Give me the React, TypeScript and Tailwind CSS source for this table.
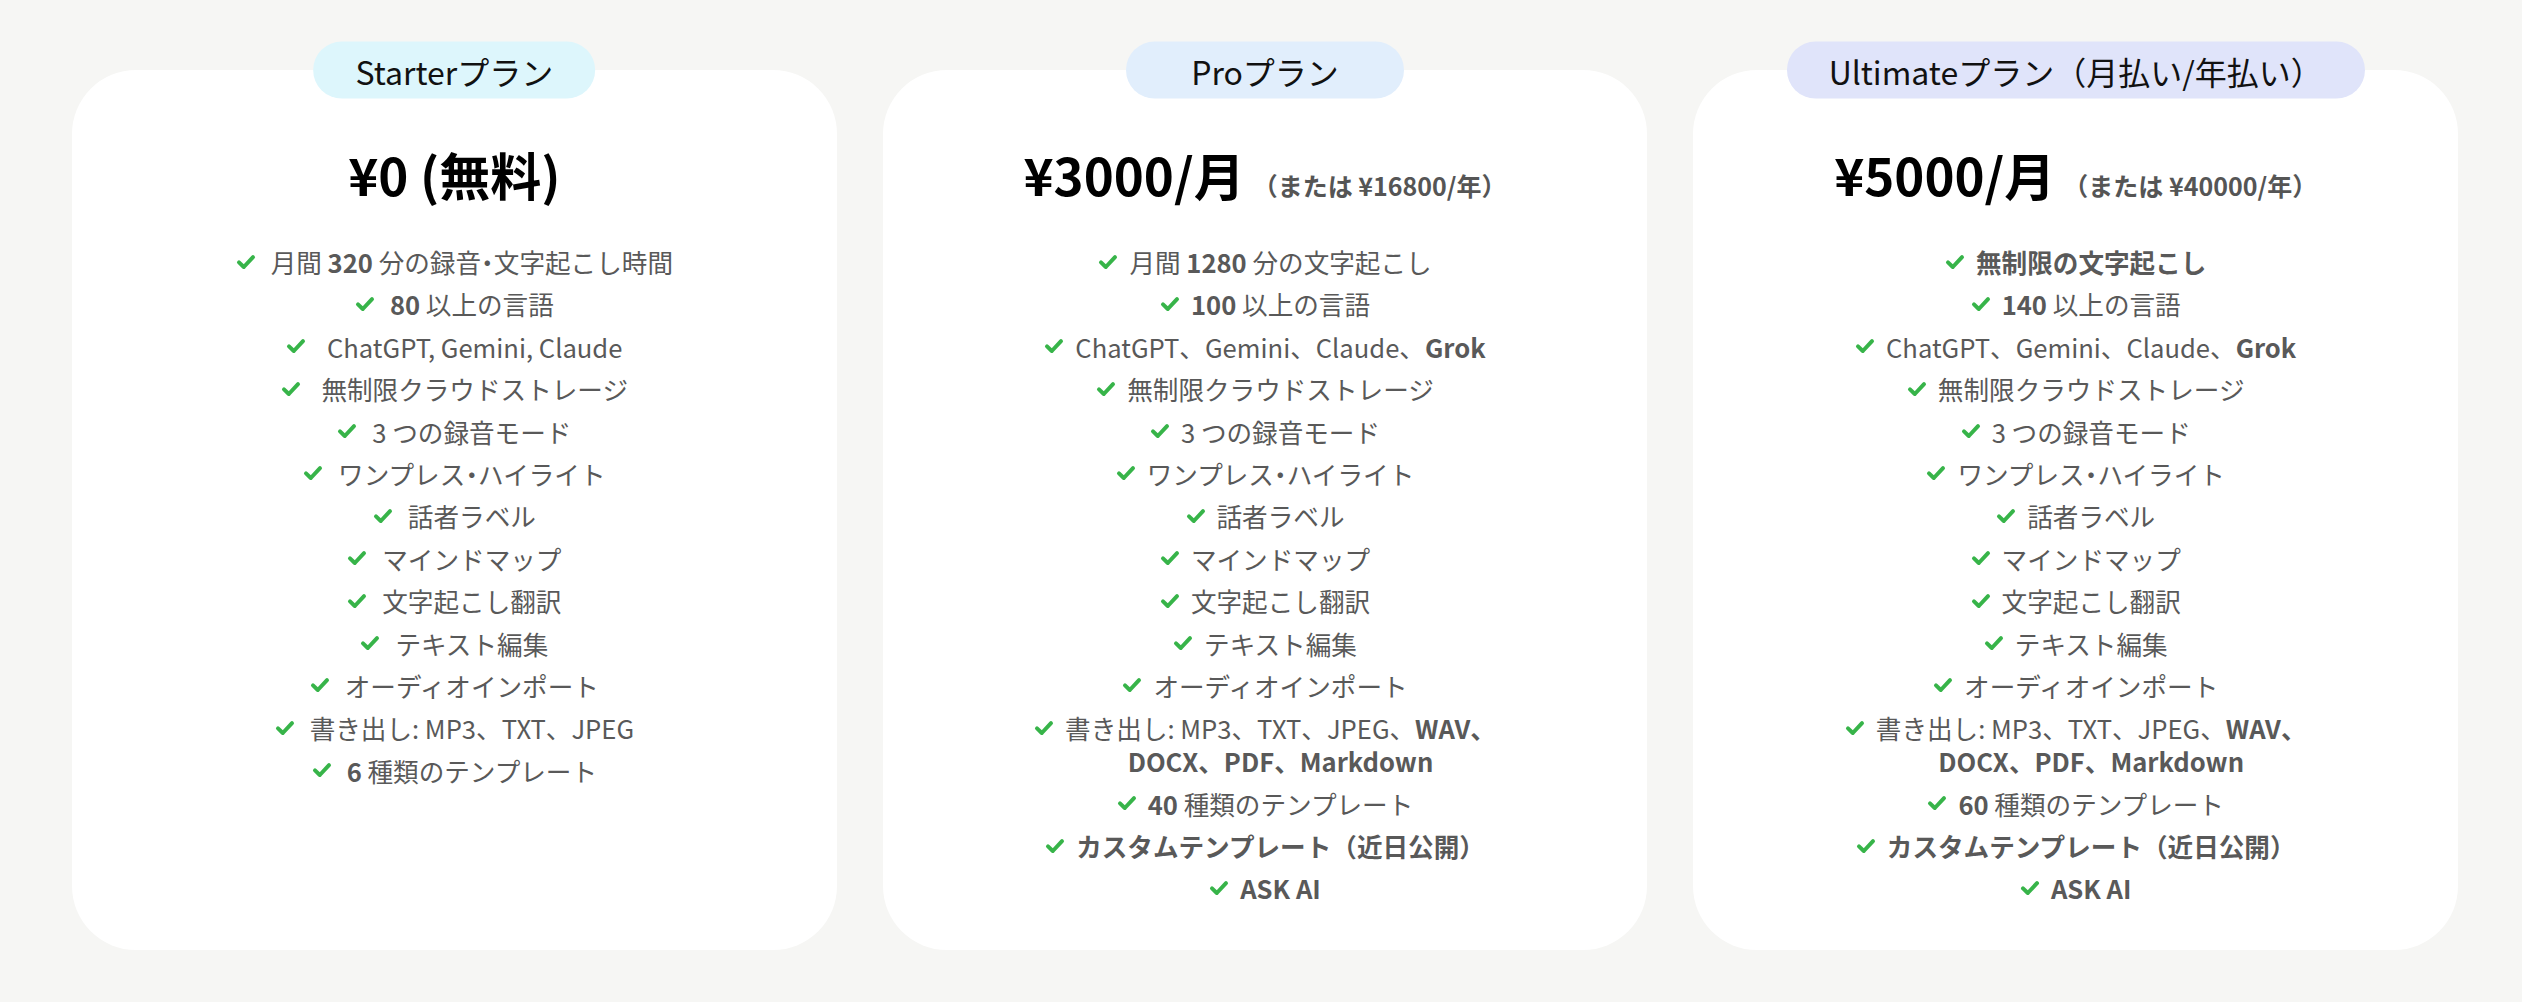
import React from "react";

type Plan = {
  badge: string;
  badgeBg: string;
  price: string;
  sub?: string;
  gap: string;
  features: React.ReactNode[];
};

const B = ({ children }: { children: React.ReactNode }) => (
  <span className="font-bold">{children}</span>
);

// half-width middle dot, as in the original
const Dot = () => <span className="[font-feature-settings:'halt']">・</span>;

const CheckIcon = () => (
  <svg
    viewBox="0 0 20 16"
    className="w-[20px] h-[16px] shrink-0 text-[#37b449]"
    fill="none"
    stroke="currentColor"
    strokeWidth="4"
    strokeLinecap="round"
    strokeLinejoin="round"
  >
    <path d="M3 8.4 7.8 13 17 3.2" />
  </svg>
);

const shared: React.ReactNode[] = [
  "無制限クラウドストレージ",
  "3 つの録音モード",
  <>
    ワンプレス<Dot />ハイライト
  </>,
  "話者ラベル",
  "マインドマップ",
  "文字起こし翻訳",
  "テキスト編集",
  "オーディオインポート",
];

const exportsFull = (
  <>
    書き出し: MP3、TXT、JPEG、<B>WAV、</B>
    <br />
    <B>DOCX、PDF、Markdown</B>
  </>
);

const plans: Plan[] = [
  {
    badge: "Starterプラン",
    badgeBg: "bg-[#ddf6fc]",
    price: "¥0 (無料)",
    gap: "gap-[15px]",
    features: [
      <>
        月間 <B>320</B> 分の録音<Dot />文字起こし時間
      </>,
      <>
        <B>80</B> 以上の言語
      </>,
      <>&nbsp;ChatGPT, Gemini, Claude</>,
      <>&nbsp;{shared[0]}</>,
      ...shared.slice(1),
      "書き出し: MP3、TXT、JPEG",
      <>
        <B>6</B> 種類のテンプレート
      </>,
    ],
  },
  {
    badge: "Proプラン",
    badgeBg: "bg-[#e1eefc]",
    price: "¥3000/月",
    sub: "（または ¥16800/年）",
    gap: "gap-[11px]",
    features: [
      <>
        月間 <B>1280</B> 分の文字起こし
      </>,
      <>
        <B>100</B> 以上の言語
      </>,
      <>
        ChatGPT、Gemini、Claude、<B>Grok</B>
      </>,
      ...shared,
      exportsFull,
      <>
        <B>40</B> 種類のテンプレート
      </>,
      <B>カスタムテンプレート（近日公開）</B>,
      <B>ASK AI</B>,
    ],
  },
  {
    badge: "Ultimateプラン（月払い/年払い）",
    badgeBg: "bg-[#e0e4fa]",
    price: "¥5000/月",
    sub: "（または ¥40000/年）",
    gap: "gap-[11px]",
    features: [
      <B>無制限の文字起こし</B>,
      <>
        <B>140</B> 以上の言語
      </>,
      <>
        ChatGPT、Gemini、Claude、<B>Grok</B>
      </>,
      ...shared,
      exportsFull,
      <>
        <B>60</B> 種類のテンプレート
      </>,
      <B>カスタムテンプレート（近日公開）</B>,
      <B>ASK AI</B>,
    ],
  },
];

const PlanCard = ({ plan }: { plan: Plan }) => (
  <div className="relative flex-1 h-[880px] bg-white rounded-[64px] pt-[74px]">
    <div
      className={`absolute left-1/2 top-0 -translate-x-1/2 -translate-y-1/2 h-[57px] min-w-[278px] px-[42px] rounded-full flex items-center justify-center whitespace-nowrap text-[32px] text-[#111] ${plan.badgeBg}`}
    >
      {plan.badge}
    </div>

    <div className="h-[60px] flex items-baseline justify-center gap-[8px] leading-[60px] whitespace-nowrap">
      <span className="text-[51px] font-bold text-black">{plan.price}</span>
      {plan.sub && (
        <span className="text-[25px] leading-none font-semibold text-[#555]">{plan.sub}</span>
      )}
    </div>

    <ul className="mt-[41px] flex flex-col gap-[9.4px] text-[25.6px] leading-[33px] text-[#595959]">
      {plan.features.map((f, i) => (
        <li key={i} className={`flex items-start justify-center ${plan.gap}`}>
          <span className="h-[33px] flex items-center">
            <CheckIcon />
          </span>
          <span className="text-center whitespace-nowrap">{f}</span>
        </li>
      ))}
    </ul>
  </div>
);

export default function App() {
  return (
    <div className="w-[2522px] h-[1002px] bg-[#f6f6f4] flex gap-[46px] pl-[72px] pr-[64px] pt-[70px] font-['Noto_Sans_CJK_JP',sans-serif]">
      {plans.map((p) => (
        <PlanCard key={p.badge} plan={p} />
      ))}
    </div>
  );
}
